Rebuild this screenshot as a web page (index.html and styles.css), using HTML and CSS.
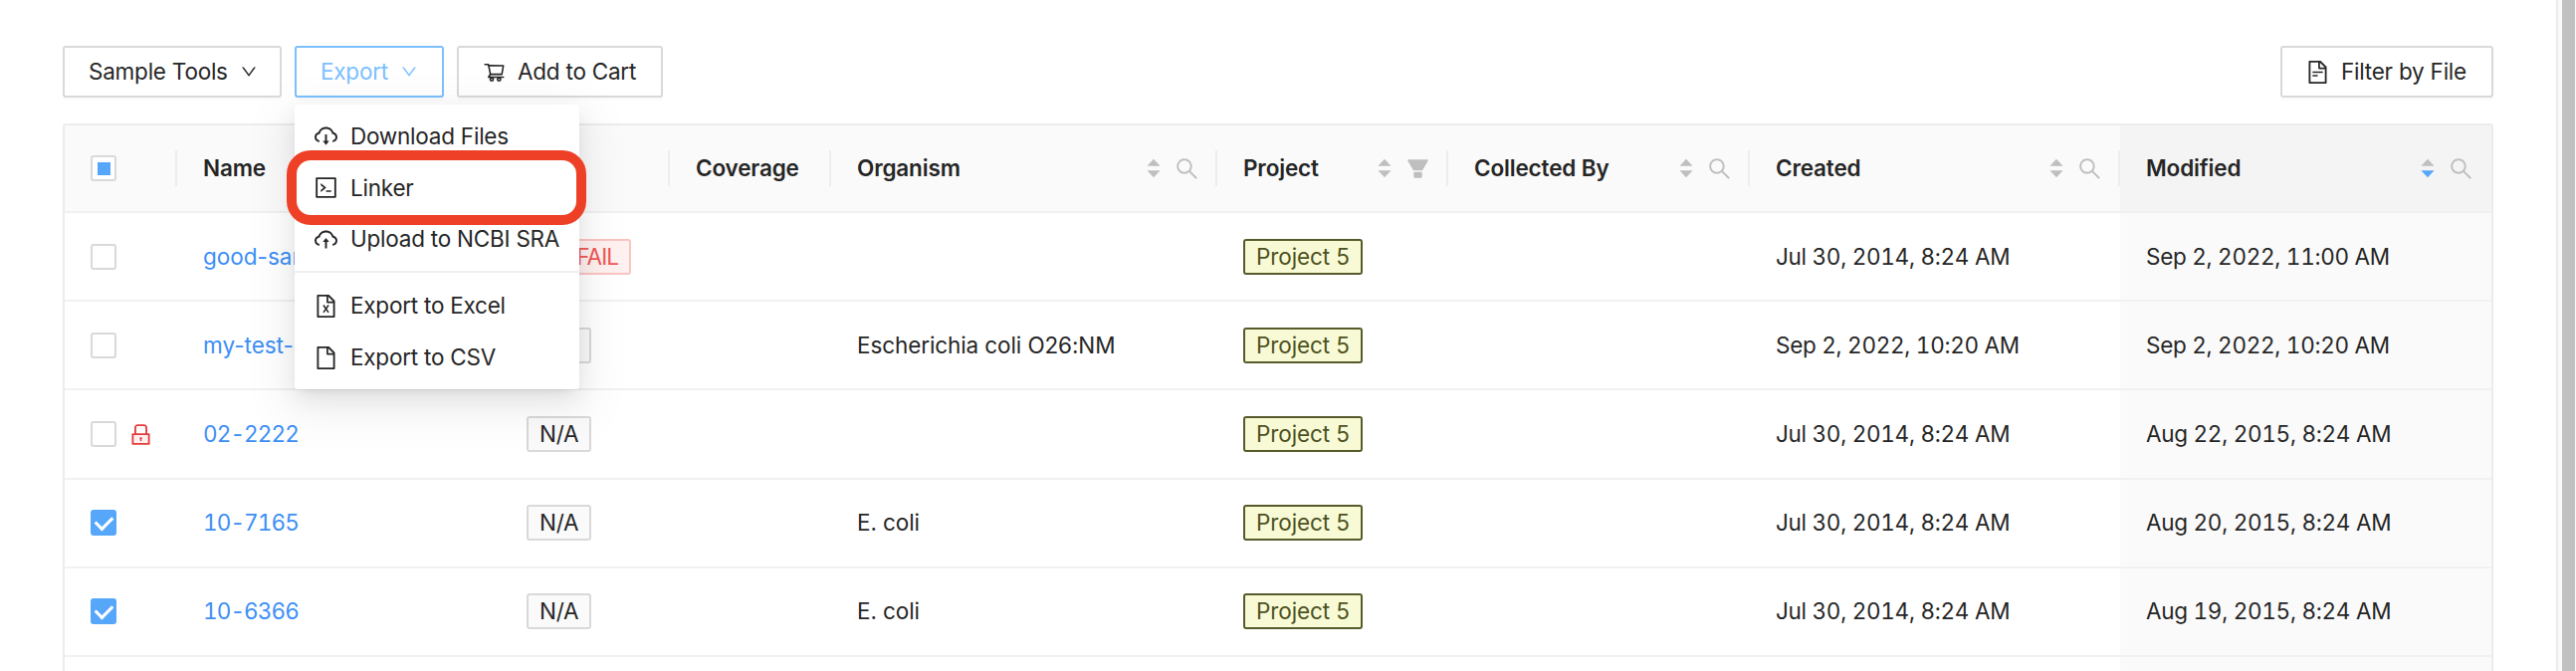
FILE: index.html
```html
<!DOCTYPE html>
<html lang="en">
<head>
<meta charset="utf-8">
<title>Project Samples</title>
<link rel="stylesheet" href="styles.css">
</head>
<body>
<svg class="sprite" aria-hidden="true">
  <symbol id="down" viewBox="64 64 896 896"><path d="M884 256h-75c-5.100 0-9.900 2.500-12.900 6.600L512 654.200 227.900 262.600c-3-4.100-7.800-6.600-12.900-6.600h-75c-6.500 0-10.300 7.400-6.500 12.700l352.600 486.100c12.800 17.600 39 17.600 51.700 0l352.600-486.100c3.900-5.300.1-12.700-6.400-12.700z"/></symbol>
  <symbol id="cart" viewBox="0 0 1024 1024"><path d="M922.900 701.900H327.400l29.900-60.900 496.800-.9c16.800 0 31.200-12 34.200-28.600l68.800-385.100c1.800-10.100-.9-20.500-7.500-28.400a34.990 34.990 0 0 0-26.600-12.500l-632-2.100-5.400-25.400c-3.400-16.200-18-28-34.600-28H96.500a35.300 35.300 0 1 0 0 70.600h125.900L246 312.800l58.100 281.300-74.800 122.100a34.960 34.960 0 0 0-3 36.800c6 11.900 18.100 19.400 31.500 19.400h62.800a102.430 102.430 0 0 0-20.600 61.700c0 56.600 46 102.600 102.600 102.600s102.600-46 102.600-102.600c0-22.300-7.400-44-20.600-61.700h161.100a102.430 102.430 0 0 0-20.600 61.700c0 56.600 46 102.600 102.600 102.600s102.600-46 102.600-102.600c0-22.300-7.400-44-20.600-61.700H923c19.400 0 35.300-15.800 35.300-35.300a35.420 35.420 0 0 0-35.400-35.200zM305.700 253l575.800 1.900-56.400 315.800-452.300.8L305.700 253zm96.900 612.700c-17.400 0-31.600-14.200-31.600-31.600 0-17.400 14.200-31.600 31.600-31.600s31.600 14.200 31.600 31.600a31.600 31.600 0 0 1-31.600 31.600zm325.100 0c-17.400 0-31.600-14.200-31.600-31.600 0-17.400 14.200-31.600 31.600-31.600s31.600 14.200 31.600 31.600a31.600 31.600 0 0 1-31.600 31.600z"/></symbol>
  <symbol id="cloud-down" viewBox="64 64 896 896"><path d="M624 706.300h-74.100V464c0-4.400-3.600-8-8-8h-60c-4.400 0-8 3.600-8 8v242.300H400c-6.700 0-10.400 7.700-6.300 12.900l112 141.700a8 8 0 0 0 12.600 0l112-141.700c4.100-5.200.4-12.900-6.300-12.900z"/><path d="M811.400 366.900C765.600 246 648.900 160 512.200 160S258.800 245.900 213 366.800C126.900 389.500 63.500 468.200 64 561.600 64.600 666 145.600 750.900 247.600 760c4.700.4 8.700-3.300 8.700-8v-60.400c0-4-3-7.400-7-7.900-27-3.400-52.500-15.200-72.100-34.500-24-23.500-37.200-55.100-37.200-88.600 0-28 9.100-54.400 26.200-76.400 16.700-21.400 40.200-36.900 66.100-43.700l37.900-10 13.900-36.700c8.600-22.800 20.600-44.200 35.700-63.500 14.900-19.200 32.600-36 52.400-50 41.100-28.900 89.500-44.200 140-44.200s98.900 15.300 140 44.300c19.900 14 37.500 30.800 52.400 50 15.100 19.300 27.100 40.700 35.700 63.500l13.800 36.600 37.800 10c54.200 14.400 92.100 63.700 92.100 120 0 33.600-13.200 65.100-37.200 88.600-19.500 19.200-44.900 31.100-71.900 34.500-4 .5-6.900 3.900-6.900 7.900V752c0 4.700 4.100 8.400 8.800 8 101.700-9.200 182.500-94 183.200-198.200.6-93.400-62.700-172.100-148.600-194.900z"/></symbol>
  <symbol id="cloud-up" viewBox="64 64 896 896"><path d="M518.300 459a8 8 0 0 0-12.600 0l-112 141.700a7.980 7.980 0 0 0 6.300 12.900h73.900V856c0 4.400 3.600 8 8 8h60c4.400 0 8-3.600 8-8V613.700H624c6.700 0 10.400-7.700 6.300-12.900L518.300 459z"/><path d="M811.400 366.900C765.600 246 648.900 160 512.200 160S258.800 245.900 213 366.800C126.900 389.500 63.500 468.200 64 561.600 64.600 666 145.600 750.900 247.600 760c4.700.4 8.700-3.300 8.700-8v-60.400c0-4-3-7.400-7-7.900-27-3.400-52.500-15.200-72.100-34.500-24-23.500-37.200-55.100-37.200-88.600 0-28 9.100-54.400 26.200-76.400 16.700-21.400 40.200-36.900 66.100-43.700l37.900-10 13.900-36.700c8.600-22.800 20.600-44.200 35.700-63.500 14.900-19.200 32.600-36 52.400-50 41.100-28.900 89.500-44.200 140-44.200s98.900 15.300 140 44.300c19.900 14 37.500 30.800 52.400 50 15.100 19.300 27.100 40.700 35.700 63.500l13.800 36.600 37.800 10c54.200 14.400 92.100 63.700 92.100 120 0 33.600-13.200 65.100-37.200 88.600-19.500 19.200-44.900 31.100-71.900 34.500-4 .5-6.900 3.900-6.900 7.900V752c0 4.700 4.100 8.400 8.800 8 101.700-9.200 182.500-94 183.200-198.200.6-93.400-62.700-172.100-148.600-194.900z"/></symbol>
  <symbol id="code" viewBox="64 64 896 896"><path d="M516 673c0 4.400 3.400 8 7.500 8h185c4.100 0 7.500-3.600 7.500-8v-48c0-4.400-3.400-8-7.500-8h-185c-4.100 0-7.500 3.600-7.500 8v48zm-194.900 6.100l192-161c3.800-3.200 3.800-9.100 0-12.300l-192-160.900A7.950 7.950 0 0 0 308 351v62.700c0 2.400 1 4.600 2.900 6.100L420.700 512l-109.800 92.200a8.100 8.100 0 0 0-2.900 6.100V673c0 6.800 7.900 10.500 13.100 6.100zM880 112H144c-17.700 0-32 14.300-32 32v736c0 17.700 14.300 32 32 32h736c17.700 0 32-14.300 32-32V144c0-17.700-14.300-32-32-32zm-40 728H184V184h656v656z"/></symbol>
  <symbol id="file" viewBox="64 64 896 896"><path d="M854.600 288.600L639.400 73.400c-6-6-14.100-9.400-22.600-9.400H192c-17.700 0-32 14.300-32 32v832c0 17.700 14.300 32 32 32h640c17.700 0 32-14.300 32-32V311.300c0-8.500-3.400-16.700-9.400-22.700zM790.200 326H602V137.800L790.200 326zm1.800 562H232V136h302v216a42 42 0 0 0 42 42h216v494z"/></symbol>
  <symbol id="file-text" viewBox="64 64 896 896"><path d="M854.600 288.600L639.400 73.400c-6-6-14.100-9.400-22.600-9.400H192c-17.700 0-32 14.300-32 32v832c0 17.700 14.300 32 32 32h640c17.700 0 32-14.300 32-32V311.300c0-8.500-3.400-16.700-9.400-22.700zM790.200 326H602V137.800L790.200 326zm1.800 562H232V136h302v216a42 42 0 0 0 42 42h216v494z"/><path d="M504 618H320c-4.400 0-8 3.600-8 8v48c0 4.400 3.600 8 8 8h184c4.400 0 8-3.600 8-8v-48c0-4.400-3.600-8-8-8zM312 490v48c0 4.400 3.600 8 8 8h384c4.400 0 8-3.600 8-8v-48c0-4.400-3.600-8-8-8H320c-4.400 0-8 3.600-8 8z"/></symbol>
  <symbol id="file-excel" viewBox="64 64 896 896"><path d="M854.600 288.600L639.400 73.400c-6-6-14.100-9.400-22.600-9.400H192c-17.700 0-32 14.300-32 32v832c0 17.700 14.300 32 32 32h640c17.700 0 32-14.300 32-32V311.300c0-8.500-3.400-16.700-9.400-22.700zM790.200 326H602V137.800L790.200 326zm1.800 562H232V136h302v216a42 42 0 0 0 42 42h216v494z"/><path d="M412 472l200 288M612 472L412 760" fill="none" stroke="currentColor" stroke-width="58"/></symbol>
  <symbol id="search" viewBox="64 64 896 896"><path d="M909.600 854.500L649.900 594.800C690.200 542.700 712 479 712 412c0-80.200-31.300-155.400-87.900-212.100-56.600-56.700-132-87.900-212.100-87.900s-155.500 31.300-212.100 87.900C143.200 256.500 112 331.800 112 412c0 80.100 31.300 155.500 87.900 212.100C256.500 680.800 331.800 712 412 712c67 0 130.600-21.800 182.700-62l259.700 259.600a8.200 8.200 0 0 0 11.600 0l43.600-43.500a8.200 8.200 0 0 0 0-11.600zM570.400 570.400C528 612.700 471.800 636 412 636s-116-23.300-158.400-65.600C211.300 528 188 471.800 188 412s23.300-116.100 65.600-158.400C296 211.300 352.200 188 412 188s116.100 23.200 158.400 65.600S636 352.200 636 412s-23.300 116.100-65.600 158.400z"/></symbol>
  <symbol id="funnel" viewBox="64 64 896 896"><path d="M349 838c0 17.700 14.200 32 31.800 32h262.400c17.600 0 31.800-14.300 31.800-32V642H349v196zm531.100-684H143.900c-24.500 0-39.800 26.700-27.500 48l221.300 376h348.800l221.300-376c12.100-21.300-3.200-48-27.700-48z"/></symbol>
  <symbol id="lock" viewBox="64 64 896 896"><path class="lock-fill" d="M232 840h560V536H232v304z"/><path d="M832 464h-68V240c0-70.700-57.300-128-128-128H388c-70.700 0-128 57.300-128 128v224h-68c-17.700 0-32 14.300-32 32v384c0 17.700 14.300 32 32 32h640c17.700 0 32-14.300 32-32V496c0-17.700-14.300-32-32-32zM332 240c0-30.900 25.100-56 56-56h248c30.900 0 56 25.100 56 56v224H332V240zm460 600H232V536h560v304zM484 701v53c0 4.400 3.600 8 8 8h40c4.400 0 8-3.600 8-8v-53a48.010 48.010 0 1 0-56 0z"/></symbol>
  <symbol id="sorter" viewBox="0 0 16 24"><path class="up" d="M8 1.500L15.500 9.500H.5z"/><path class="desc" d="M8 22.500L.5 14.500h15z"/></symbol>
</svg>

<main class="page">
  <div class="toolbar">
    <button class="btn btn-tools">Sample Tools <svg class="caret"><use href="#down"/></svg></button>
    <div class="dropdown">
      <button class="btn btn-export">Export <svg class="caret"><use href="#down"/></svg></button>
      <div class="menu">
        <div class="item"><svg class="icon"><use href="#cloud-down"/></svg><span>Download Files</span></div>
        <div class="item"><svg class="icon"><use href="#code"/></svg><span>Linker</span></div>
        <div class="item"><svg class="icon"><use href="#cloud-up"/></svg><span>Upload to NCBI SRA</span></div>
        <div class="divider"></div>
        <div class="item"><svg class="icon"><use href="#file-excel"/></svg><span>Export to Excel</span></div>
        <div class="item"><svg class="icon"><use href="#file"/></svg><span>Export to CSV</span></div>
        <div class="highlight"></div>
      </div>
    </div>
    <button class="btn btn-cart"><svg class="icon"><use href="#cart"/></svg>Add to Cart</button>
    <button class="btn btn-filter"><svg class="icon"><use href="#file-text"/></svg>Filter by File</button>
  </div>

  <div class="table">
    <div class="row head">
      <div class="cell"><span class="check partial"></span></div>
      <div class="cell">Name</div>
      <div class="cell"></div>
      <div class="cell">Coverage</div>
      <div class="cell">Organism<span class="tools"><svg class="sorter"><use href="#sorter"/></svg><svg class="glass"><use href="#search"/></svg></span></div>
      <div class="cell">Project<span class="tools"><svg class="sorter"><use href="#sorter"/></svg><svg class="glass"><use href="#funnel"/></svg></span></div>
      <div class="cell">Collected By<span class="tools"><svg class="sorter"><use href="#sorter"/></svg><svg class="glass"><use href="#search"/></svg></span></div>
      <div class="cell">Created<span class="tools"><svg class="sorter"><use href="#sorter"/></svg><svg class="glass"><use href="#search"/></svg></span></div>
      <div class="cell">Modified<span class="tools"><svg class="sorter active"><use href="#sorter"/></svg><svg class="glass"><use href="#search"/></svg></span></div>
    </div>
    <div class="row">
      <div class="cell"><span class="check"></span></div>
      <div class="cell"><a class="link">good-sample</a></div>
      <div class="cell"><span class="tag fail">QC FAIL</span></div>
      <div class="cell"></div><div class="cell"></div>
      <div class="cell"><span class="tag project">Project 5</span></div>
      <div class="cell"></div>
      <div class="cell date">Jul 30, 2014, 8:24 AM</div>
      <div class="cell date">Sep 2, 2022, 11:00 AM</div>
    </div>
    <div class="row">
      <div class="cell"><span class="check"></span></div>
      <div class="cell"><a class="link">my-test-s</a></div>
      <div class="cell"><span class="tag">N/A</span></div>
      <div class="cell"></div>
      <div class="cell tight">Escherichia coli O26:NM</div>
      <div class="cell"><span class="tag project">Project 5</span></div>
      <div class="cell"></div>
      <div class="cell date">Sep 2, 2022, 10:20 AM</div>
      <div class="cell date">Sep 2, 2022, 10:20 AM</div>
    </div>
    <div class="row">
      <div class="cell"><span class="check"></span><svg class="lock"><use href="#lock"/></svg></div>
      <div class="cell"><a class="link numeric">02-2222</a></div>
      <div class="cell"><span class="tag">N/A</span></div>
      <div class="cell"></div><div class="cell"></div>
      <div class="cell"><span class="tag project">Project 5</span></div>
      <div class="cell"></div>
      <div class="cell date">Jul 30, 2014, 8:24 AM</div>
      <div class="cell date">Aug 22, 2015, 8:24 AM</div>
    </div>
    <div class="row">
      <div class="cell"><span class="check on"></span></div>
      <div class="cell"><a class="link numeric">10-7165</a></div>
      <div class="cell"><span class="tag">N/A</span></div>
      <div class="cell"></div>
      <div class="cell tight">E. coli</div>
      <div class="cell"><span class="tag project">Project 5</span></div>
      <div class="cell"></div>
      <div class="cell date">Jul 30, 2014, 8:24 AM</div>
      <div class="cell date">Aug 20, 2015, 8:24 AM</div>
    </div>
    <div class="row">
      <div class="cell"><span class="check on"></span></div>
      <div class="cell"><a class="link numeric">10-6366</a></div>
      <div class="cell"><span class="tag">N/A</span></div>
      <div class="cell"></div>
      <div class="cell tight">E. coli</div>
      <div class="cell"><span class="tag project">Project 5</span></div>
      <div class="cell"></div>
      <div class="cell date">Jul 30, 2014, 8:24 AM</div>
      <div class="cell date">Aug 19, 2015, 8:24 AM</div>
    </div>
    <div class="row rest">
      <div class="cell"></div><div class="cell"></div><div class="cell"></div>
      <div class="cell"></div><div class="cell"></div><div class="cell"></div>
      <div class="cell"></div><div class="cell"></div><div class="cell"></div>
    </div>
  </div>
</main>
<div class="scrollbar"><div class="thumb"></div></div>
</body>
</html>
```

FILE: styles.css
```css
* { box-sizing: border-box; }

body {
  margin: 0;
  height: 674px;
  overflow: hidden;
  display: flex;
  background: #fff;
  color: #262626;
  font: 22.5px/36px Inter, "Liberation Sans", sans-serif;
}

svg { fill: currentColor; flex: none; display: block; }
.sprite { position: absolute; width: 0; height: 0; }

.page {
  flex: 1;
  min-width: 0;
  height: 674px;
  display: flex;
  flex-direction: column;
  padding: 46px 63px 0;
}

/* Toolbar */
.toolbar {
  display: flex;
  flex: none;
  gap: 13px;
  height: 52px;
  letter-spacing: -0.23px;
}

.btn {
  height: 52px;
  display: flex;
  align-items: center;
  white-space: nowrap;
  padding: 0 0 0 24px;
  border: 2px solid #d9d9d9;
  border-radius: 3px;
  background: #fff;
  color: #262626;
  font: inherit;
  letter-spacing: inherit;
  box-shadow: 0 3px 0 rgba(0, 0, 0, 0.016);
}

.btn-tools { width: 220px; }
.btn-export { width: 150px; border-color: #7cc0ff; color: #7cc0ff; }
.btn-cart { width: 207px; }
.btn-filter { width: 214px; margin-left: auto; }
.icon { width: 23px; height: 23px; margin-right: 13px; }
.btn .icon { margin-right: 12px; }
.caret { width: 16px; height: 16px; margin-left: 13px; }

/* Export menu */
.dropdown { position: relative; }

.menu {
  position: absolute;
  z-index: 2;
  top: 59px;
  left: 0;
  width: 286px;
  padding: 6px 0;
  border-radius: 3px;
  background: #fff;
  box-shadow:
    0 5px 10px -6px rgba(0, 0, 0, 0.12),
    0 10px 26px 0 rgba(0, 0, 0, 0.08),
    0 15px 46px 13px rgba(0, 0, 0, 0.05);
}

.item {
  display: flex;
  align-items: center;
  height: 51.8px;
  padding-left: 20px;
  white-space: nowrap;
}

.divider { height: 2px; margin: 6px 0 7px; background: #f0f0f0; }

.highlight {
  position: absolute;
  top: 46px;
  left: -8px;
  width: 301px;
  height: 75px;
  border: 10px solid #ee4026;
  border-radius: 24px;
}

/* Samples table */
.table {
  flex: 1;
  min-height: 0;
  display: flex;
  flex-direction: column;
  margin-top: 26px;
  border: 2px solid #ececec;
  border-bottom: 0;
  border-radius: 3px 3px 0 0;
}

.row {
  flex: none;
  display: grid;
  grid-template-columns: 113px 325px 170px 162px 388px 232px 303px 372px 1fr;
  height: 89.05px;
}
.head { height: 88.4px; }
.rest { flex: 1; height: auto; }

.cell {
  display: flex;
  align-items: center;
  position: relative;
  min-width: 0;
  padding-left: 26px;
  border-bottom: 2px solid #f1f1f1;
  white-space: nowrap;
}
.rest .cell { border-bottom: 0; }
.tight { letter-spacing: -0.1px; }
.date { font-variant-numeric: tabular-nums; letter-spacing: -0.28px; }

.cell:last-child { background: #fafafa; }

.head .cell {
  background: #fafafa;
  font-weight: 600;
  letter-spacing: -0.15px;
}
.head .cell:last-child { background: #f4f4f4; }

.head .cell:not(:last-child)::after {
  content: "";
  position: absolute;
  right: 0;
  top: 25px;
  width: 2px;
  height: 36px;
  background: #ededed;
}

.tools {
  display: flex;
  align-items: center;
  gap: 15px;
  margin-left: auto;
  padding-right: 19px;
  color: #bfbfbf;
}
.sorter { width: 14px; height: 22px; }
.sorter.active { --desc: #56a7fa; }
.desc { fill: var(--desc, #bfbfbf); }
.glass { width: 23px; height: 23px; }

.check {
  width: 26px;
  height: 26px;
  display: grid;
  place-items: center;
  border: 2px solid #d9d9d9;
  border-radius: 3px;
  background: #fff;
}
.check.partial::before {
  content: "";
  width: 13px;
  height: 13px;
  background: #56a7fa;
}
.check.on { background: #56a7fa; border-color: #56a7fa; }
.check.on::before {
  content: "";
  width: 8px;
  height: 14px;
  border: solid #fff;
  border-width: 0 3px 3px 0;
  transform: translateY(-2px) rotate(45deg);
}

.lock { width: 23px; height: 23px; margin-left: 13px; color: #e53b3b; }
.lock-fill { fill: #fff1f0; }

.link { color: #3d8ff5; }
.numeric { font-variant-numeric: tabular-nums; letter-spacing: -0.9px; }

.tag {
  height: 36px;
  padding: 0 11px;
  line-height: 32px;
  letter-spacing: -0.2px;
  border: 2px solid #d9d9d9;
  border-radius: 3px;
  background: #fafafa;
}
.tag.fail { letter-spacing: -0.9px; color: #f05654; border-color: #fbc4c1; background: #fff1f0; }
.tag.project { letter-spacing: -0.1px; color: #4d5122; border-color: #575b2b; background: #f8fad5; }

/* Page scrollbar */
.scrollbar {
  width: 20px;
  padding: 0 1px 0 4px;
  border-left: 2px solid #ebebeb;
  background: #fafafa;
}
.thumb { height: 100%; background: #c1c1c1; }
```
